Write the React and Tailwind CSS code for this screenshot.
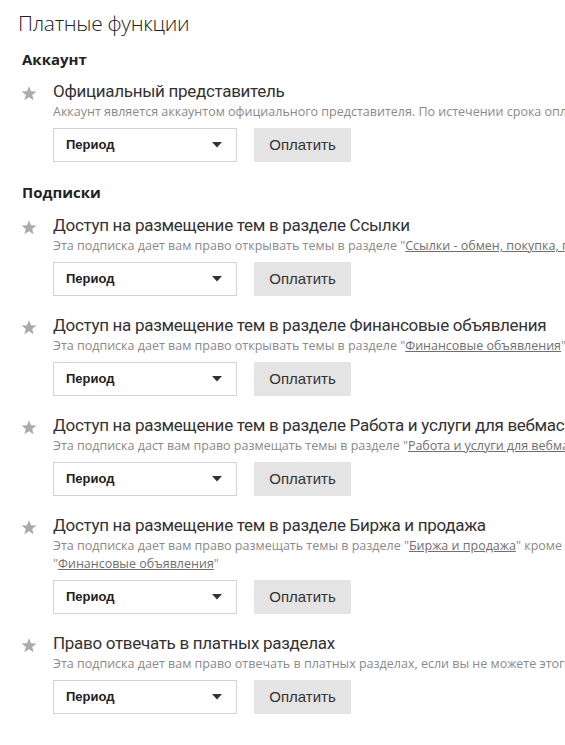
import React from "react";

function Star() {
  return (
    <svg width="16" height="15" viewBox="0 0 24 23" className="shrink-0 mt-[6px]">
      <polygon
        points="12,0.5 15.1,8.2 23.4,8.6 16.9,13.8 19.1,21.9 12,17.3 4.9,21.9 7.1,13.8 0.6,8.6 8.9,8.2"
        fill="#ababab"
      />
    </svg>
  );
}

function Link({ children }) {
  return <span className="underline text-[#6f6f6f] decoration-[#6f6f6f]">{children}</span>;
}

function Item({ title, desc }) {
  return (
    <div className="flex gap-[16px] pl-[21px]">
      <Star />
      <div className="flex flex-col">
        <div className="text-[17px] leading-[22px] tracking-[-0.3px] text-[#333] whitespace-nowrap" style={{ fontFamily: 'Roboto, "Open Sans", sans-serif' }}>
          {title}
        </div>
        <div className="mt-[1px] text-[12.5px] leading-[18px] text-[#8a8a8a] whitespace-nowrap" style={{ fontFamily: '"Open Sans", sans-serif' }}>
          {desc}
        </div>
        <div className="mt-[7px] flex items-center gap-[17px]" style={{ fontFamily: '"Liberation Sans", Arial, sans-serif' }}>
          <div className="w-[184px] h-[34px] border border-[#d3d3d3] bg-white flex items-center justify-between pl-[12px] pr-[14px]">
            <span className="text-[13px] font-bold text-[#222]">Период</span>
            <svg width="10" height="6" viewBox="0 0 10 6">
              <polygon points="0,0 10,0 5,5.5" fill="#333" />
            </svg>
          </div>
          <div className="w-[97px] h-[34px] bg-[#e4e4e4] flex items-center justify-center text-[15px] text-[#333]">
            Оплатить
          </div>
        </div>
      </div>
    </div>
  );
}

export default function App() {
  const q = '"';
  return (
    <div className="w-[565px] h-[745px] overflow-hidden bg-white">
      <div className="w-[900px] pt-[9px]">
        <h1 className="pl-[18px] text-[21px] leading-[28px] font-light tracking-[-0.3px] text-[#222]" style={{ fontFamily: '"Open Sans", sans-serif' }}>
          Платные функции
        </h1>
        <h2 className="mt-[12px] pl-[22px] text-[15px] leading-[20px] font-bold text-[#222]" style={{ fontFamily: '"Open Sans", sans-serif' }}>
          Аккаунт
        </h2>
        <div className="mt-[11px]">
          <Item
            title="Официальный представитель"
            desc="Аккаунт является аккаунтом официального представителя. По истечении срока оплаты статус будет снят."
          />
        </div>
        <h2 className="mt-[20px] pl-[22px] text-[15px] leading-[20px] font-bold text-[#222]" style={{ fontFamily: '"Open Sans", sans-serif' }}>
          Подписки
        </h2>
        <div className="mt-[12px] flex flex-col gap-[18px]">
          <Item
            title="Доступ на размещение тем в разделе Ссылки"
            desc={<>Эта подписка дает вам право открывать темы в разделе {q}<Link>Ссылки - обмен, покупка, продажа</Link>{q}</>}
          />
          <Item
            title="Доступ на размещение тем в разделе Финансовые объявления"
            desc={<>Эта подписка дает вам право открывать темы в разделе {q}<Link>Финансовые объявления</Link>{q}</>}
          />
          <Item
            title="Доступ на размещение тем в разделе Работа и услуги для вебмастеров"
            desc={<>Эта подписка даст вам право размещать темы в разделе {q}<Link>Работа и услуги для вебмастеров</Link>{q}</>}
          />
          <Item
            title="Доступ на размещение тем в разделе Биржа и продажа"
            desc={<>Эта подписка дает вам право размещать темы в разделе {q}<Link>Биржа и продажа</Link>{q} кроме подраздела<br />{q}<Link>Финансовые объявления</Link>{q}</>}
          />
          <Item
            title="Право отвечать в платных разделах"
            desc="Эта подписка дает вам право отвечать в платных разделах, если вы не можете этого делать бесплатно."
          />
        </div>
      </div>
    </div>
  );
}
